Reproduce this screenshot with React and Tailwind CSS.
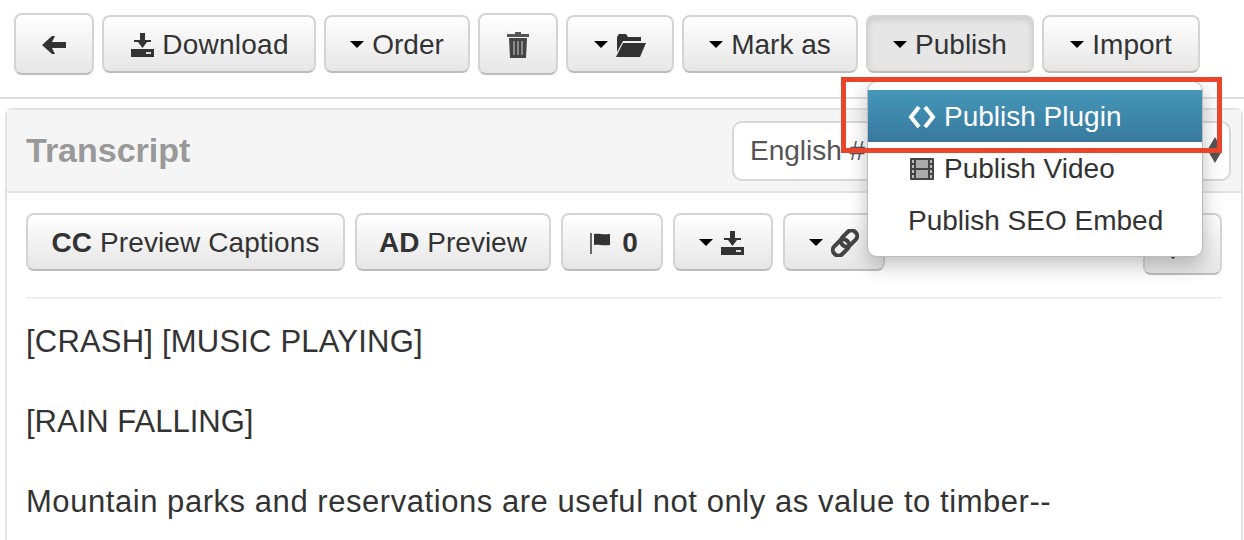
import clsx from 'clsx'

const FONT = "font-['Liberation_Sans',Arial,sans-serif]"

function Caret() {
  return <span className="inline-block w-0 h-0 border-x-[7.5px] border-x-transparent border-t-[7px] border-t-black -translate-y-[1px]" />
}

function ArrowLeftIcon() {
  return (
    <svg width="24" height="18" viewBox="0 0 24 18" fill="#333">
      <path d="M0 9 L10 0 H13 L10 6 H24 V12 H10 L13 18 H10 Z" />
    </svg>
  )
}

function DownloadIcon() {
  return (
    <svg width="23" height="24" viewBox="0 0 23 24" fill="#333">
      <path d="M9 0h5v7h6v2h-4l-4.500 6L7 9H3V7h6z" />
      <path d="M0 16h23v8H0z" />
      <rect x="15" y="19" width="5" height="2" fill="#ddd" />
    </svg>
  )
}

function TrashIcon() {
  return (
    <svg width="22" height="26" viewBox="0 0 22 26">
      <path d="M8 0h6v2h8v3H0V2h8z" fill="#555" />
      <path d="M2 6h18l-1 20H3z" fill="#444" />
      <path d="M6 9h2v14H6zM10 9h2v14h-2zM14 9h2v14h-2z" fill="#888" />
    </svg>
  )
}

function FolderIcon() {
  return (
    <svg width="30" height="23" viewBox="0 0 30 23" fill="#333">
      <path d="M1 3 L3 0 H10 L12 3 H25 V7 H7 L1 18 Z" />
      <path d="M7 9 H30 L24 23 H0 Z" />
    </svg>
  )
}

function FlagIcon() {
  return (
    <svg width="20" height="21" viewBox="0 0 20 21" className="mr-[4px]">
      <rect x="0" y="0" width="2" height="21" fill="#666" />
      <path d="M4 1 C8 0 12 2 20 1 V12 C12 13 8 11 4 12 Z" fill="#333" />
    </svg>
  )
}

function LinkIcon() {
  return (
    <svg width="28" height="28" viewBox="0 0 28 28" fill="none" stroke="#444" strokeWidth="4">
      <rect x="9" y="4" width="18" height="11" rx="5" transform="rotate(-45 18 9.500)" />
      <rect x="1" y="13" width="18" height="11" rx="5" transform="rotate(-45 10 18.500)" />
    </svg>
  )
}

function FilmIcon() {
  return (
    <svg width="24" height="22" viewBox="0 0 24 22" className="mr-[10px]">
      <rect width="24" height="22" rx="1" fill="#444" />
      <rect x="6" y="2" width="12" height="8" fill="#aaa" />
      <rect x="6" y="12" width="12" height="8" fill="#aaa" />
      <path d="M2 2h2v3H2zM2 7h2v3H2zM2 12h2v3H2zM2 17h2v3H2zM20 2h2v3h-2zM20 7h2v3h-2zM20 12h2v3h-2zM20 17h2v3h-2z" fill="#bbb" />
    </svg>
  )
}

function CodeIcon() {
  return (
    <svg width="28" height="24" viewBox="0 0 28 24" fill="none" stroke="#fff" strokeWidth="4" className="mr-[8px]">
      <path d="M11 2 L3 12 L11 22" />
      <path d="M17 2 L25 12 L17 22" />
    </svg>
  )
}

function Btn({ className, active, children }) {
  return (
    <div
      className={clsx(
        'flex items-center justify-center gap-2 pt-[2px] rounded-[8px] border-2 border-[#d4d4d4] border-b-[#bdbdbd] text-[28px] leading-none text-[#333]',
        active ? 'bg-[#e6e6e6] shadow-[inset_0_3px_6px_rgba(0,0,0,0.12)]' : 'bg-gradient-to-b from-white to-[#e6e6e6]',
        className
      )}
    >
      {children}
    </div>
  )
}

export default function App() {
  return (
    <div className={clsx('relative w-[1244px] h-[540px] overflow-hidden bg-white', FONT)}>
      <div className="flex items-center pt-[13px] pb-[22px] pl-[14px] gap-[8px] border-b-2 border-[#dcdcdc]">
        <Btn className="w-[80px] h-[62px]"><ArrowLeftIcon /></Btn>
        <Btn className="w-[214px] h-[58px] pl-[2px]"><DownloadIcon /><span className="tracking-[0.25px]">Download</span></Btn>
        <Btn className="w-[146px] h-[58px]"><Caret /> Order</Btn>
        <Btn className="w-[80px] h-[62px]"><TrashIcon /></Btn>
        <Btn className="w-[108px] h-[58px]"><Caret /><FolderIcon /></Btn>
        <Btn className="w-[176px] h-[58px]"><Caret /> Mark as</Btn>
        <Btn className="w-[168px] h-[58px]" active><Caret /> Publish</Btn>
        <Btn className="w-[158px] h-[58px]"><Caret /> Import</Btn>
      </div>

      <div className="ml-[5px] mr-[1px] mt-[9px] h-[480px] border-2 border-[#e3e3e3] rounded-t-[8px]">
        <div className="flex items-center justify-between h-[83px] pl-[19px] pr-[10px] bg-[#f5f5f5] border-b-2 border-[#e3e3e3]">
          <div className="text-[34px] font-bold text-[#999]">Transcript</div>
          <div className="relative flex items-center w-[499px] h-[60px] pl-[16px] rounded-[10px] border-2 border-[#d8d8d8] bg-white text-[28px] text-[#555]">
            English #1
            <div className="absolute right-[7px] top-[14px] flex flex-col gap-[2px]">
              <span className="w-0 h-0 border-x-[7px] border-x-transparent border-b-[12px] border-b-[#555]" />
              <span className="w-0 h-0 border-x-[7px] border-x-transparent border-t-[12px] border-t-[#555]" />
            </div>
          </div>
        </div>

        <div className="px-[19px] pt-[20px]">
          <div className="flex items-start gap-[10px] pb-[22px] border-b-2 border-[#eee]">
            <Btn className="w-[319px] h-[58px]"><span className="tracking-[0.1px]"><b>CC</b> Preview Captions</span></Btn>
            <Btn className="w-[196px] h-[58px]"><span><b>AD</b> Preview</span></Btn>
            <Btn className="w-[102px] h-[58px] pl-[4px]"><FlagIcon /><b>0</b></Btn>
            <Btn className="w-[100px] h-[58px] pr-[3px]"><Caret /><DownloadIcon /></Btn>
            <Btn className="w-[102px] h-[58px]"><Caret /><LinkIcon /></Btn>
            <Btn className="w-[79px] h-[62px] ml-auto">
              <svg width="6" height="27" viewBox="0 0 6 27" fill="#222" className="-translate-x-[10px]">
                <path d="M0 0h6v24l-3 3-3-3z" />
              </svg>
            </Btn>
          </div>
          <div className="pt-[23px] text-[31px] leading-[40px] text-[#333]">
            <p className="mb-[40px] tracking-[0.2px]">[CRASH] [MUSIC PLAYING]</p>
            <p className="mb-[40px]">[RAIN FALLING]</p>
            <p className="tracking-[0.55px] whitespace-nowrap">Mountain parks and reservations are useful not only as value to timber--</p>
          </div>
        </div>
      </div>

      <div className="absolute left-[867px] top-[81px] w-[336px] h-[176px] pt-[8px] rounded-[10px] bg-white border border-[#bbb] shadow-[0_8px_20px_rgba(0,0,0,0.25)] text-[28px] text-[#333]">
        <div className="flex items-center h-[52px] pt-[2px] pl-[40px] bg-gradient-to-b from-[#4597b9] to-[#37799d] text-white">
          <CodeIcon />Publish Plugin
        </div>
        <div className="flex items-center h-[52px] pt-[2px] pl-[42px]">
          <FilmIcon />Publish Video
        </div>
        <div className="flex items-center h-[52px] pt-[2px] pl-[40px]">Publish SEO Embed</div>
      </div>

      <div className="absolute left-[841px] top-[77px] w-[381px] h-[76px] border-[5px] border-[#e8452a]" />
    </div>
  )
}
